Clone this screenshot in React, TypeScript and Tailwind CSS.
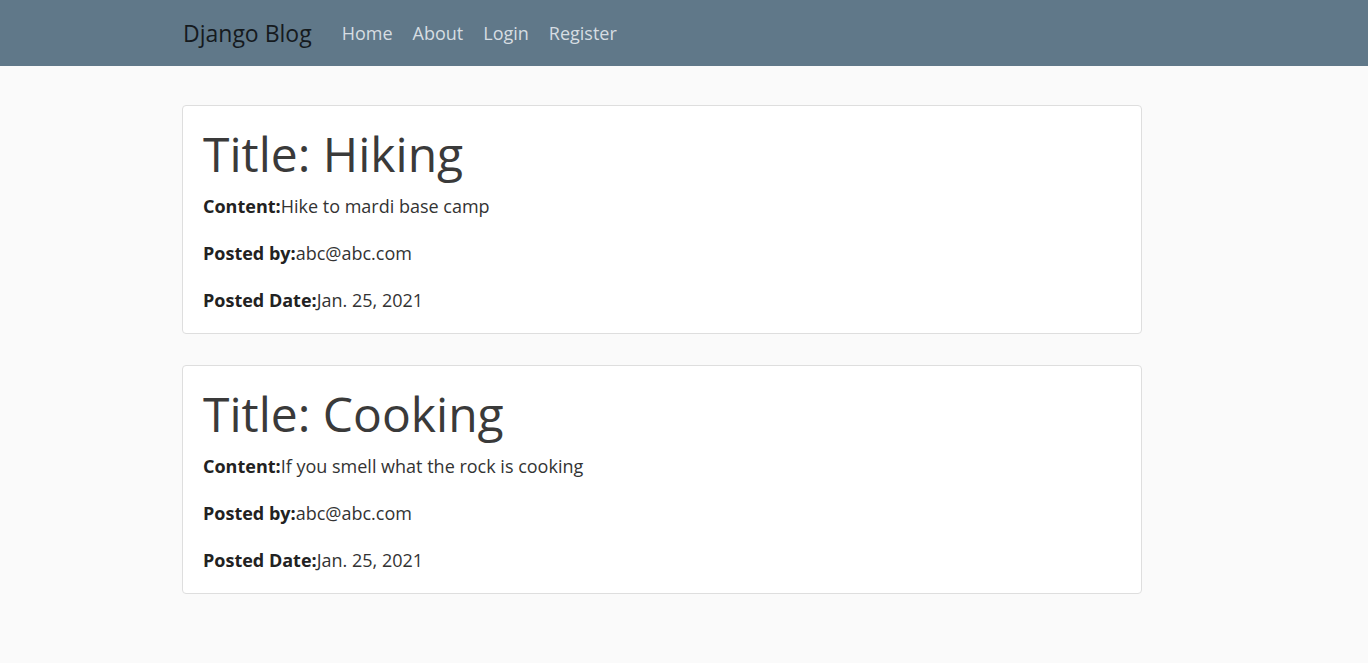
const posts = [
  {
    title: "Hiking",
    content: "Hike to mardi base camp",
    author: "abc@abc.com",
    date: "Jan. 25, 2021",
  },
  {
    title: "Cooking",
    content: "If you smell what the rock is cooking",
    author: "abc@abc.com",
    date: "Jan. 25, 2021",
  },
];

const navLinks = ["Home", "About", "Login", "Register"];

function PostCard({ post }: { post: (typeof posts)[number] }) {
  return (
    <div className="bg-white border border-[#dedede] rounded-[4px] px-5 pt-5 pb-[19px]">
      <h1 className="text-[48px] leading-[56px] font-medium text-[#3a3a3a] mb-[11px]">
        Title: {post.title}
      </h1>
      <p className="text-[18px] leading-[27px] text-[#333] mb-5">
        <strong className="font-bold text-[#222]">Content:</strong>
        {post.content}
      </p>
      <p className="text-[18px] leading-[27px] text-[#333] mb-5">
        <strong className="font-bold text-[#222]">Posted by:</strong>
        {post.author}
      </p>
      <p className="text-[18px] leading-[27px] text-[#333]">
        <strong className="font-bold text-[#222]">Posted Date:</strong>
        {post.date}
      </p>
    </div>
  );
}

export default function App() {
  return (
    <div
      className="min-h-[663px] bg-[#fafafa]"
      style={{ fontFamily: '"Segoe UI", "Open Sans", "Noto Sans", sans-serif' }}
    >
      {/* Navbar */}
      <nav className="h-[66px] bg-[#607889] flex items-center">
        <div className="ml-[183px] flex items-center">
          <span className="text-[23px] text-[#151a1e] mr-[30px]">Django Blog</span>
          <ul className="flex items-center gap-[20px]">
            {navLinks.map((l) => (
              <li key={l} className="text-[18px] text-[#d6dde2]">
                {l}
              </li>
            ))}
          </ul>
        </div>
      </nav>

      {/* Posts */}
      <main className="ml-[182px] w-[960px] pt-[39px] flex flex-col gap-[31px]">
        {posts.map((p) => (
          <PostCard key={p.title} post={p} />
        ))}
      </main>
    </div>
  );
}
